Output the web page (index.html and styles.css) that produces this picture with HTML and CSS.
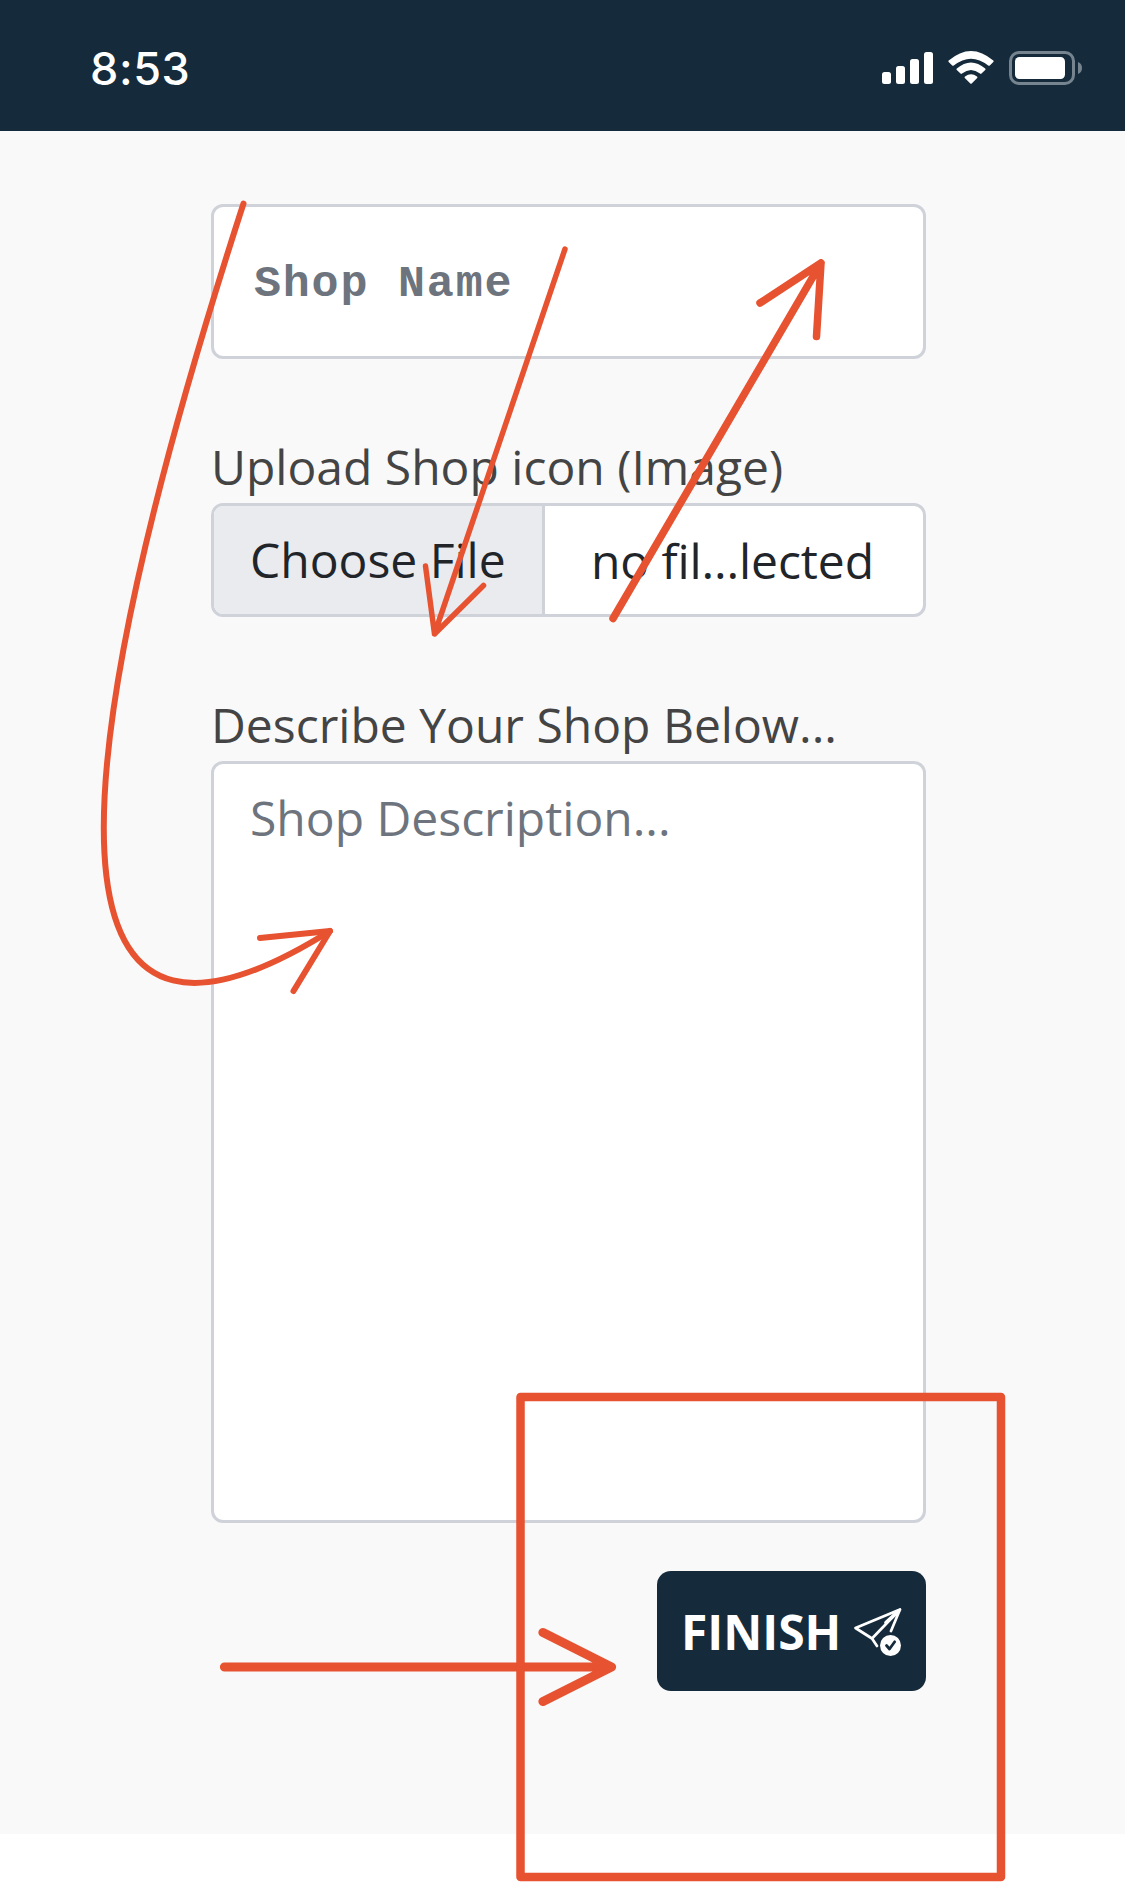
FILE: index.html
```html
<!DOCTYPE html>
<html lang="en">
<head>
<meta charset="utf-8">
<title>Create shop</title>
<link rel="stylesheet" href="styles.css">
</head>
<body>
<header class="status-bar">
  <span class="clock">8:53</span>
  <svg class="status-icons" width="202" height="36" viewBox="0 0 202 36" fill="#fff">
    <rect x="0" y="21" width="9" height="12" rx="2.5"/>
    <rect x="14" y="15" width="9" height="18" rx="2.5"/>
    <rect x="28" y="8" width="9" height="25" rx="2.5"/>
    <rect x="42" y="1" width="9" height="32" rx="2.5"/>
    <path d="M66.7 9.6Q89 -9.6 111.3 9.6Q112 10.3 111.3 11L107.8 14.5Q107 15.2 106.200 14.500Q89 .8 71.800 14.500Q71 15.200 70.200 14.500L66.700 11Q66 10.300 66.700 9.600Z"/>
    <path d="M74.800 17.600Q89 5.400 103.200 17.600Q104 18.300 103.200 19L99.500 22.600Q98.800 23.200 98 22.600Q89 15.600 80 22.600Q79.200 23.200 78.500 22.600L74.800 19Q74 18.300 74.800 17.600Z"/>
    <path d="M83 25.500Q89 21 95 25.500Q95.900 26.200 95.200 27L89.700 32.400Q89 33 88.300 32.400L82.800 27Q82.100 26.200 83 25.500Z"/>
    <rect x="128.500" y="1.500" width="63" height="31" rx="8.500" fill="none" stroke="#768490" stroke-width="3"/>
    <rect x="133" y="6" width="50" height="22" rx="4.500"/>
    <path d="M196 11Q200 12.500 200 17T196 23Z" fill="#768490"/>
  </svg>
</header>
<main class="page">
  <form class="shop-form">
    <input class="field name-field" type="text" placeholder="Shop Name">
    <div class="group">
      <label class="label">Upload Shop icon (Image)</label>
      <div class="field file-field">
        <span class="file-button">Choose File</span>
        <span class="file-status">no fil...lected</span>
      </div>
    </div>
    <div class="group">
      <label class="label">Describe Your Shop Below...</label>
      <textarea class="field description" placeholder="Shop Description..."></textarea>
    </div>
    <button class="finish" type="button">
      <span>FINISH</span>
      <svg width="48" height="50" viewBox="0 0 48 50" fill="none" stroke="#fff" stroke-width="2.700" stroke-linecap="round" stroke-linejoin="round">
        <path d="M46 2.500L1.500 21L18 31.500L46 2.500L37 24M18 31.500L23 39"/>
        <path d="M44.500 4L32 15.500" stroke-width="3.600"/>
        <circle cx="36.500" cy="38.500" r="10.500" fill="#fff" stroke="none"/>
        <path d="M32.500 38.500L35.500 42L40.700 34.800" stroke="#152b3b" stroke-width="2.800"/>
      </svg>
    </button>
  </form>
</main>
<svg class="annotations" width="1125" height="1889" viewBox="0 0 1125 1889">
  <g stroke-width="6">
    <path d="M243.500 203.500Q-74 1184 330 931"/>
    <path d="M260 938L330 931L293.500 991"/>
  </g>
  <path d="M565 249L434.500 634M425.500 566L434.500 634L483.500 585.500" stroke-width="5.500"/>
  <path d="M613 618.500L821 263M760 303L821 263L816.500 336.500" stroke-width="7.500"/>
  <path d="M224.500 1667H611M543 1632.500L611.500 1667L543 1701.500" stroke-width="9.200"/>
  <rect x="520.500" y="1397" width="480.500" height="480" stroke-width="8.500"/>
</svg>
</body>
</html>
```
FILE: styles.css
```css
* { box-sizing: border-box; }

body {
  position: relative;
  width: 1125px;
  height: 1889px;
  margin: 0;
  overflow: hidden;
  background: #fff;
  font-family: "Open Sans", "Noto Sans", sans-serif;
  font-size: 48px;
}

.status-bar {
  display: flex;
  justify-content: space-between;
  height: 131px;
  padding: 40px 41px 0 90px;
  background: #152b3b;
  color: #fff;
}

.clock {
  font: 500 45px/57px Inter, sans-serif;
  letter-spacing: 0.6px;
}

.status-icons { margin-top: 11px; }

.page {
  height: 1703px;
  padding: 73px 199px 0 211px;
  background: #f9f9f9;
}

.shop-form {
  display: flex;
  flex-direction: column;
}

.field {
  display: block;
  width: 100%;
  border: 3px solid #d0d2da;
  border-radius: 12px;
  background: #fff;
  font-size: 48px;
  outline: none;
  resize: none;
}

.field::placeholder {
  color: #6d747d;
  opacity: 1;
}

.name-field {
  height: 155px;
  padding: 5px 39px 0 40px;
  font-family: "Courier New", "Liberation Mono", monospace;
  font-size: 45px;
  font-weight: 700;
  letter-spacing: 1.8px;
}

.group {
  display: flex;
  flex-direction: column;
}

.label {
  height: 72px;
  margin-top: 72px;
  color: #444;
  line-height: 72px;
  white-space: nowrap;
}

.file-field {
  display: flex;
  height: 114px;
  overflow: hidden;
  color: #212529;
  line-height: 108px;
  white-space: nowrap;
}

.file-button {
  width: 331px;
  padding-left: 36px;
  border-right: 3px solid #d0d2da;
  background: #e9ebef;
}

.file-status {
  padding: 1px 0 0 46px;
  letter-spacing: -0.1px;
}

.description {
  height: 762px;
  padding: 18px 36px;
  font-family: inherit;
  line-height: 72px;
}

.finish {
  display: flex;
  align-items: center;
  align-self: flex-end;
  gap: 13px;
  width: 269px;
  height: 120px;
  margin-top: 48px;
  padding: 1px 24px 0;
  border: 0;
  border-radius: 14px;
  background: #152b3b;
  color: #fff;
  font: 700 48px/72px "Open Sans", sans-serif;
}

.finish svg { flex: none; }

.annotations {
  position: absolute;
  top: 0;
  left: 0;
  fill: none;
  stroke: #e75230;
  stroke-linecap: round;
  stroke-linejoin: round;
  pointer-events: none;
}
```
